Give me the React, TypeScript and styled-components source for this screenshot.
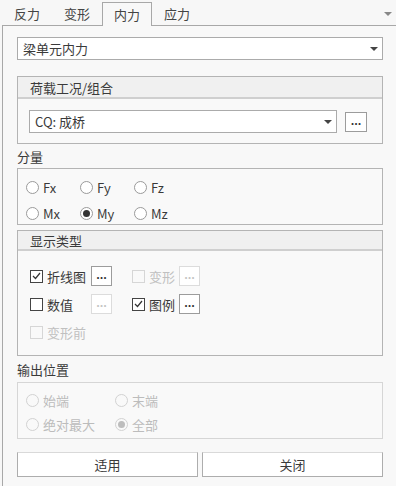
import * as React from 'react'
import styled, { createGlobalStyle } from 'styled-components'

const GlobalStyle = createGlobalStyle`
  html, body {
    margin: 0;
    padding: 0;
    background: #f7f7f7;
    font-family: "Noto Sans CJK SC", "Noto Sans", sans-serif;
    font-size: 13px;
    color: #3a3a3a;
  }
`

const Root = styled.div`
  width: 396px;
  height: 486px;
  overflow: hidden;
  background: #f7f7f7;
`

const TabBar = styled.div`
  display: flex;
  align-items: flex-end;
  height: 25px;
  padding-left: 2px;
  position: relative;
`

const Tab = styled.div<{ active?: boolean }>`
  width: 50px;
  height: 23px;
  box-sizing: border-box;
  display: flex;
  align-items: center;
  justify-content: center;
  color: #444;
  line-height: 1;
  ${(p) =>
    p.active &&
    `
    border: 1px solid #a8a8a8;
    border-bottom: none;
    background: #f8f8f8;
    height: 24px;
    margin-bottom: -1px;
    position: relative;
    z-index: 1;
  `}
`

const TabMenu = styled.div`
  position: absolute;
  right: 4px;
  top: 12px;
  width: 0;
  height: 0;
  border-left: 4px solid transparent;
  border-right: 4px solid transparent;
  border-top: 4px solid #888;
`

const Panel = styled.div`
  margin-left: 2px;
  border-left: 1px solid #a8a8a8;
  border-top: 1px solid #a8a8a8;
  background: #f8f8f8;
  height: 460px;
  padding: 11px 13px 0 14px;
  display: flex;
  flex-direction: column;
`

const Combo = styled.div<{ width?: number }>`
  height: 23px;
  box-sizing: border-box;
  width: ${(p) => (p.width ? `${p.width}px` : '100%')};
  border: 1px solid #ababab;
  background: #fff;
  display: flex;
  align-items: center;
  padding: 0 4px 0 5px;
  color: #3a3a3a;
`

const ComboText = styled.span`
  flex: 1;
`

const Caret = styled.span`
  width: 0;
  height: 0;
  border-left: 4px solid transparent;
  border-right: 4px solid transparent;
  border-top: 4px solid #444;
`

const Group = styled.div<{ top: number; disabled?: boolean }>`
  margin-top: ${(p) => p.top}px;
  border: 1px solid ${(p) => (p.disabled ? '#d6d6d6' : '#b4b4b4')};
  background: #f9f9f9;
`

const GroupHeader = styled.div<{ h: number }>`
  height: ${(p) => p.h}px;
  background: #f0f0f0;
  border-bottom: 2px solid #cfcfcf;
  display: flex;
  align-items: center;
  padding-left: 12px;
  color: #3a3a3a;
`

const LoadBody = styled.div`
  display: flex;
  align-items: center;
  padding: 11px 15px 10px 11px;
`

const DotsButton = styled.div<{ disabled?: boolean; big?: boolean }>`
  box-sizing: border-box;
  width: ${(p) => (p.big ? 22 : 21)}px;
  height: 20px;
  border: 1px solid ${(p) => (p.disabled ? '#dcdcdc' : '#9c9c9c')};
  background: #fff;
  display: flex;
  align-items: center;
  justify-content: center;
  color: ${(p) => (p.disabled ? '#c4c4c4' : '#333')};
  font-size: 11px;
  font-weight: bold;
  line-height: 1;
  padding-bottom: 3px;
`

const SideButton = styled(DotsButton)`
  margin-left: 8px;
`

const Label = styled.div<{ h: number }>`
  height: ${(p) => p.h}px;
  display: flex;
  align-items: center;
  color: #3a3a3a;
`

const RadioGrid = styled.div<{ col: number; pad: string; gap: number }>`
  display: grid;
  grid-template-columns: repeat(3, ${(p) => p.col}px);
  grid-auto-rows: 22px;
  row-gap: ${(p) => p.gap}px;
  padding: ${(p) => p.pad};
`

const RadioItem = styled.div<{ disabled?: boolean }>`
  display: flex;
  align-items: center;
  gap: 4px;
  color: ${(p) => (p.disabled ? '#bcbcbc' : '#3a3a3a')};
`

const Circle = styled.span<{ checked?: boolean; disabled?: boolean }>`
  box-sizing: border-box;
  width: 13px;
  height: 13px;
  border-radius: 50%;
  border: 1px solid ${(p) => (p.disabled ? '#d2d2d2' : '#9a9a9a')};
  background: ${(p) => (p.disabled ? '#f9f9f9' : '#fff')};
  display: flex;
  align-items: center;
  justify-content: center;
  &::after {
    content: '';
    display: ${(p) => (p.checked ? 'block' : 'none')};
    width: 7px;
    height: 7px;
    border-radius: 50%;
    background: ${(p) => (p.disabled ? '#bdbdbd' : '#333')};
  }
`

const DisplayBody = styled.div`
  display: flex;
  flex-direction: column;
  gap: 8px;
  padding: 15px 0 13px 12px;
`

const CheckRow = styled.div`
  display: flex;
  height: 20px;
  align-items: center;
`

const CheckItem = styled.div<{ w?: number }>`
  display: flex;
  align-items: center;
  width: ${(p) => (p.w ? `${p.w}px` : 'auto')};
`

const Box = styled.span<{ disabled?: boolean }>`
  box-sizing: border-box;
  width: 13px;
  height: 13px;
  border: 1px solid ${(p) => (p.disabled ? '#d6d6d6' : '#444')};
  background: ${(p) => (p.disabled ? '#f9f9f9' : '#fff')};
  display: flex;
  align-items: center;
  justify-content: center;
`

const CheckText = styled.span<{ w: number; disabled?: boolean }>`
  box-sizing: border-box;
  width: ${(p) => p.w}px;
  padding-left: 4px;
  color: ${(p) => (p.disabled ? '#c0c0c0' : '#3a3a3a')};
`

const Footer = styled.div`
  display: flex;
  gap: 4px;
  margin-top: 13px;
`

const Button = styled.div`
  flex: 1;
  height: 25px;
  box-sizing: border-box;
  border: 1px solid #adadad;
  border-top-color: #d9d9d9;
  background: #fff;
  display: flex;
  align-items: center;
  justify-content: center;
  color: #3a3a3a;
`

const Check = () => (
  <svg width="9" height="8" viewBox="0 0 9 8">
    <path d="M1 4 L3.5 6.5 L8 1" fill="none" stroke="#333" strokeWidth="1.2" />
  </svg>
)

interface CheckProps {
  label: string
  labelWidth: number
  width?: number
  checked?: boolean
  disabled?: boolean
  button?: 'on' | 'off'
}

const CheckField: React.FC<CheckProps> = ({ label, labelWidth, width, checked, disabled, button }) => (
  <CheckItem w={width}>
    <Box disabled={disabled}>{checked && <Check />}</Box>
    <CheckText w={labelWidth} disabled={disabled}>
      {label}
    </CheckText>
    {button && <DotsButton disabled={button === 'off'}>...</DotsButton>}
  </CheckItem>
)

const components = ['Fx', 'Fy', 'Fz', 'Mx', 'My', 'Mz']
const positions = [
  { name: '始端', checked: false },
  { name: '末端', checked: false },
  { name: '绝对最大', checked: false },
  { name: '全部', checked: true },
]

export default function App() {
  return (
    <Root>
      <GlobalStyle />
      <TabBar>
        <Tab>反力</Tab>
        <Tab>变形</Tab>
        <Tab active>内力</Tab>
        <Tab>应力</Tab>
        <TabMenu />
      </TabBar>
      <Panel>
        <Combo>
          <ComboText>梁单元内力</ComboText>
          <Caret />
        </Combo>

        <Group top={16}>
          <GroupHeader h={20}>荷载工况/组合</GroupHeader>
          <LoadBody>
            <Combo width={308}>
              <ComboText>CQ: 成桥</ComboText>
              <Caret />
            </Combo>
            <SideButton big>...</SideButton>
          </LoadBody>
        </Group>

        <Label h={24}>分量</Label>
        <Group top={0}>
          <RadioGrid col={54} pad="7px 0 0 8px" gap={4}>
            {components.map((c) => (
              <RadioItem key={c}>
                <Circle checked={c === 'My'} />
                {c}
              </RadioItem>
            ))}
          </RadioGrid>
        </Group>

        <Group top={5}>
          <GroupHeader h={18}>显示类型</GroupHeader>
          <DisplayBody>
            <CheckRow>
              <CheckField label="折线图" labelWidth={48} width={102} checked button="on" />
              <CheckField label="变形" labelWidth={34} disabled button="off" />
            </CheckRow>
            <CheckRow>
              <CheckField label="数值" labelWidth={48} width={102} button="off" />
              <CheckField label="图例" labelWidth={34} checked button="on" />
            </CheckRow>
            <CheckRow>
              <CheckField label="变形前" labelWidth={48} disabled />
            </CheckRow>
          </DisplayBody>
        </Group>

        <Label h={26}>输出位置</Label>
        <Group top={0} disabled>
          <RadioGrid col={89} pad="6px 0 3px 8px" gap={2}>
            {positions.map((p, i) => (
              <React.Fragment key={p.name}>
                <RadioItem disabled>
                  <Circle disabled checked={p.checked} />
                  {p.name}
                </RadioItem>
                {i % 2 === 1 && <span />}
              </React.Fragment>
            ))}
          </RadioGrid>
        </Group>

        <Footer>
          <Button>适用</Button>
          <Button>关闭</Button>
        </Footer>
      </Panel>
    </Root>
  )
}
